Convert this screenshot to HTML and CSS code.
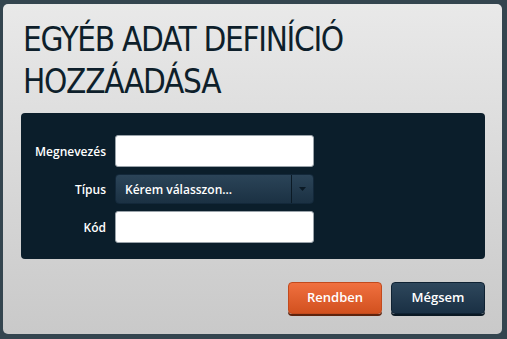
FILE: index.html
```html
<!DOCTYPE html>
<html lang="hu">
<head>
<meta charset="utf-8">
<title>Egyéb adat definíció hozzáadása</title>
<link rel="stylesheet" href="styles.css">
</head>
<body>
<div class="backdrop">
  <div class="dialog">
    <h1 class="title">EGYÉB ADAT DEFINÍCIÓ<br>HOZZÁADÁSA</h1>
    <div class="panel">
      <div class="row">
        <label class="label">Megnevezés</label>
        <input class="field" type="text">
      </div>
      <div class="row">
        <label class="label">Típus</label>
        <div class="select">
          <span class="select-text">Kérem válasszon...</span>
          <span class="select-arrow"><svg width="7" height="4" viewBox="0 0 7 4"><path d="M0 0h7L3.5 4z" fill="#0b1a25"/></svg></span>
        </div>
      </div>
      <div class="row">
        <label class="label">Kód</label>
        <input class="field" type="text">
      </div>
    </div>
    <div class="actions">
      <button class="btn btn-ok">Rendben</button>
      <button class="btn btn-cancel">Mégsem</button>
    </div>
  </div>
</div>
</body>
</html>
```
FILE: styles.css
```css
html, body {
  margin: 0;
  padding: 0;
}
body {
  width: 507px;
  height: 339px;
  overflow: hidden;
  background: #34454f;
  font-family: "Open Sans", "DejaVu Sans", sans-serif;
}
.backdrop {
  padding: 4px 5px 0 3px;
}
.dialog {
  box-sizing: border-box;
  width: 499px;
  height: 330px;
  border-radius: 5px;
  background: linear-gradient(#e9e9e9, #c9c9c9);
  padding: 15px 17px 0 18px;
}
.title {
  margin: 0 0 0 2px;
  font-family: "DejaVu Sans Condensed", "DejaVu Sans", sans-serif;
  font-weight: normal;
  font-size: 33px;
  line-height: 42px;
  color: #0e1f2b;
  letter-spacing: -1.3px;
}
.panel {
  margin-top: 10px;
  width: 464px;
  height: 146px;
  box-sizing: border-box;
  background: #0b1e2b;
  border-radius: 4px;
  padding: 22px 0 0 0;
  display: flex;
  flex-direction: column;
  gap: 7px;
}
.row {
  display: flex;
  align-items: center;
}
.label {
  width: 85px;
  text-align: right;
  color: #ffffff;
  font-size: 12px;
  font-weight: 600;
  margin-right: 9px;
}
.field {
  box-sizing: border-box;
  width: 199px;
  height: 32px;
  border: 1px solid #9aa3aa;
  border-radius: 3px;
  background: #ffffff;
  margin: 0;
  padding: 0;
}
.select {
  box-sizing: border-box;
  width: 199px;
  height: 30px;
  border-radius: 4px;
  background: linear-gradient(#2b4458, #1b3143);
  border: 1px solid #13283a;
  display: flex;
  align-items: center;
}
.select-text {
  flex: 1;
  color: #ffffff;
  font-size: 12px;
  font-weight: 600;
  padding-left: 9px;
}
.select-arrow {
  width: 21px;
  height: 100%;
  border-left: 1px solid #0b1a25;
  display: flex;
  align-items: center;
  justify-content: center;
}
.actions {
  display: flex;
  justify-content: flex-end;
  gap: 9px;
  margin-top: 23px;
  width: 464px;
}
.btn {
  box-sizing: border-box;
  width: 94px;
  height: 32px;
  border-radius: 4px;
  font-family: "Open Sans", "DejaVu Sans", sans-serif;
  font-size: 13px;
  font-weight: 600;
  color: #ffffff;
  padding: 0 0 2px 0;
  cursor: pointer;
}
.btn-ok {
  background: linear-gradient(#f0703f, #d2511f);
  border: 1px solid #c24a1d;
  box-shadow: 0 2px 0 #5e230d;
}
.btn-cancel {
  background: linear-gradient(#2e475c, #1a3044);
  border: 1px solid #0f2233;
  box-shadow: 0 2px 0 #0a1823;
}
```
